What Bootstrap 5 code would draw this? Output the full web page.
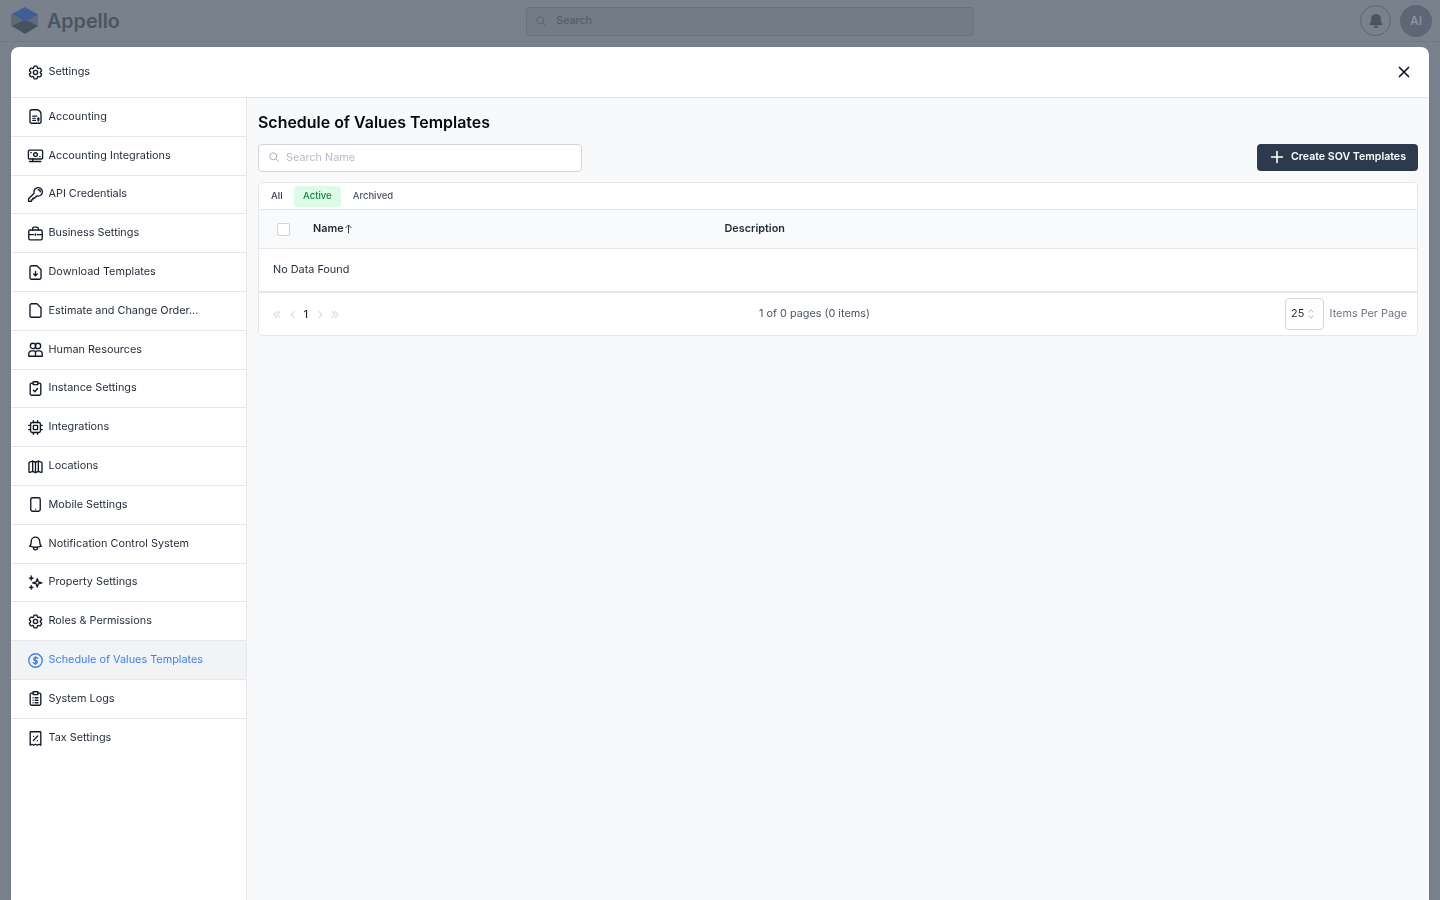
<!DOCTYPE html>
<html lang="en">
<head>
    <meta charset="UTF-8">
    <meta name="viewport" content="width=device-width, initial-scale=1.0">
    <title>Settings</title>
    <link href="https://cdn.jsdelivr.net/npm/bootstrap@5.3.0/dist/css/bootstrap.min.css" rel="stylesheet">
    <style>
        html, body { height: 100%; overflow: hidden; }
        body { background: #78818c; font-family: "Inter", "Liberation Sans", sans-serif; font-size: 10.85px; color: #111827; }
        svg { display: block; flex: none; }
        .ico { width: 17px; height: 17px; margin-top: 2px; fill: none; stroke: #111827; stroke-width: 1.9; stroke-linecap: round; stroke-linejoin: round; }

        /* dimmed app bar behind the dialog */
        .app-bar { height: 42px; padding: 0 8px 0 10px; border-bottom: 1px solid #717a85; }
        .app-logo { width: 29px; height: 29px; }
        .app-name { font-size: 19.7px; font-weight: 600; color: #4a5563; margin: 2px 0 0 8px; }
        .app-search { position: absolute; left: 526px; top: 7px; width: 448px; height: 29px; border: 1px solid #697280; border-radius: 3px; background: #737b87; color: #4f5a68; padding: 0 0 2px 8px; gap: 9px; }
        .app-search .ico { width: 12px; height: 12px; margin-top: 0; stroke: #5b6573; stroke-width: 2; }
        .bell-btn { width: 31px; height: 31px; border: 1px solid #5c6674; border-radius: 50%; color: #4a5563; }
        .bell-btn svg { width: 18px; height: 18px; fill: currentColor; }
        .avatar-btn { width: 32px; height: 32px; border-radius: 50%; background: #5d6776; color: #8a929d; font-size: 12px; font-weight: 600; margin-left: 9px; }

        /* dialog */
        .settings-dialog { position: fixed; left: 11px; top: 47px; width: 1418px; bottom: 0; background: #fff; border-radius: 8px 8px 0 0; display: flex; flex-direction: column; overflow: hidden; }
        .dialog-head { height: 51px; padding: 0 15px 2px 15.5px; border-bottom: 1px solid #e2e5ea; color: #1f2937; gap: 5px; flex: none; }
        .dialog-close { width: 20px; height: 20px; padding: 0; margin-top: 2px; background: none; border: 0; }
        .dialog-close svg { width: 16px; height: 16px; stroke: #111827; stroke-width: 1.7; stroke-linecap: round; }
        .dialog-body { flex: 1; min-height: 0; }

        .side-menu { width: 236px; flex: none; border-right: 1px solid #e5e7eb; background: #fff; }
        .side-item { height: 38.8px; display: flex; align-items: center; gap: 5px; padding: 0 15px 2px 15.5px; color: #1f2937; border-bottom: 1px solid #e5e7eb; border-radius: 0; text-decoration: none; }
        .side-item:last-child { border-bottom: 0; }
        .side-item.is-current { background: #f2f3f5; color: #3b82f6; margin-top: -1px; height: 39.8px; border-top: 1px solid #e5e7eb; }
        .side-item.is-current .ico { stroke: #3b82f6; }

        .content-pane { flex: 1; background: #f8f9fb; padding: 14px 11px 0 11px; min-width: 0; }
        .pane-title { font-size: 15.95px; font-weight: 600; color: #050810; line-height: 21px; margin: 0 0 11px; }
        .name-search { width: 324px; height: 28px; border: 1px solid #d1d5db; border-radius: 4px; background: #fff; padding: 0 0 2px 9px; gap: 6px; color: #b6bcc6; }
        .name-search .ico { width: 12px; height: 12px; margin-top: 0; stroke: #a8afba; stroke-width: 2; }
        .create-btn { height: 27px; width: 161px; background: #2d3a4d; border: 0; border-radius: 4px; color: #fff; font-size: 10.6px; font-weight: 600; padding: 0 0 2px 12px; gap: 6px; }
        .create-btn svg { width: 16px; height: 16px; stroke: currentColor; stroke-width: 1.6; stroke-linecap: round; margin-top: 1px; }

        .data-card { margin-top: 10px; background: #fff; border: 1px solid #e5e7eb; border-radius: 5px; overflow: hidden; }
        .tab-row { height: 27px; padding: 0 0 0 6px; gap: 2px; border-bottom: 1px solid #e5e7eb; }
        .tab-pill { height: 21px; padding: 0 6px; font-size: 9.5px; font-weight: 500; color: #4b5563; border-radius: 3px; display: flex; align-items: center; }
        .tab-pill.is-on { background: #dcfce7; color: #15803d; padding: 0 9.5px; margin: 0 3.5px 0 3px; }
        .tab-pill:first-child { color: #374151; }

        .data-table { margin: 0; table-layout: fixed; font-size: 10.85px; }
        .data-table th { height: 38px; background: #f9fafb; font-weight: 600; color: #1f2937; vertical-align: middle; padding: 0 0 1px; border-bottom: 1px solid #e5e7eb; }
        .data-table td { height: 44px; padding: 0 0 1px 14px; vertical-align: middle; color: #1f2937; border-bottom: 2px solid #e5e7eb; }
        .box-col { width: 54px; }
        .name-col { width: 411.5px; }
        .row-box { width: 13px; height: 13px; margin: 2px 0 0 18px; border: 1px solid #cfd3da; border-radius: 2px; background: #fff; }
        .sort-arrow { width: 9px; height: 10px; stroke: #374151; fill: none; stroke-width: 1; margin-top: 2px; }

        .pager-row { height: 42px; padding: 0 10px 0 14px; position: relative; }
        .pager-nav { gap: 7.5px; color: #d9dce1; }
        .pager-nav svg { width: 8px; height: 9px; stroke: currentColor; fill: none; stroke-width: 1.2; stroke-linecap: round; stroke-linejoin: round; margin-top: 2px; }
        .pager-nav b { font-weight: 500; color: #1f2937; margin: 0 0 0 -.5px; }
        .pager-count { position: absolute; left: 500px; top: 12px; color: #4b5563; }
        .per-page { width: 39px; height: 32px; border: 1px solid #d1d5db; border-radius: 4px; padding: 0 0 1px 5px; gap: 3px; color: #1f2937; }
        .per-page svg { width: 8px; height: 10px; stroke: #b6bcc6; fill: none; stroke-width: 1; margin-top: 1px; }
        .per-label { color: #6b7280; margin: 0 0 1px 5.5px; }
    </style>
</head>
<body>

<svg width="0" height="0" class="position-absolute">
    <defs>
        <symbol id="i-cog" viewBox="0 0 24 24"><path d="M9.594 3.94c.09-.542.56-.94 1.11-.94h2.593c.55 0 1.02.398 1.11.94l.213 1.281c.063.374.313.686.645.87.074.04.147.083.22.127.325.196.72.257 1.075.124l1.217-.456a1.125 1.125 0 0 1 1.37.49l1.296 2.247a1.125 1.125 0 0 1-.26 1.431l-1.003.827c-.293.241-.438.613-.43.992a7.723 7.723 0 0 1 0 .255c-.008.378.137.75.43.991l1.004.827c.424.35.534.955.26 1.43l-1.298 2.247a1.125 1.125 0 0 1-1.369.491l-1.217-.456c-.355-.133-.75-.072-1.076.124a6.47 6.47 0 0 1-.22.128c-.331.183-.581.495-.644.869l-.213 1.281c-.09.543-.56.94-1.11.94h-2.594c-.55 0-1.019-.398-1.11-.94l-.213-1.281c-.062-.374-.312-.686-.644-.87a6.52 6.52 0 0 1-.22-.127c-.325-.196-.72-.257-1.076-.124l-1.217.456a1.125 1.125 0 0 1-1.369-.49l-1.297-2.247a1.125 1.125 0 0 1 .26-1.431l1.004-.827c.292-.24.437-.613.43-.991a6.932 6.932 0 0 1 0-.255c.007-.38-.138-.751-.43-.992l-1.004-.827a1.125 1.125 0 0 1-.26-1.43l1.297-2.247a1.125 1.125 0 0 1 1.37-.491l1.216.456c.356.133.751.072 1.076-.124.072-.044.146-.086.22-.128.332-.183.582-.495.644-.869l.214-1.28Z"/><path d="M15 12a3 3 0 1 1-6 0 3 3 0 0 1 6 0Z"/></symbol>
        <symbol id="i-acct" viewBox="0 0 24 24"><path d="M13.500 2.500H6.500A2.200 2.200 0 0 0 4.200 4.700v14.600A2.200 2.200 0 0 0 6.500 21.500h11a2.200 2.200 0 0 0 2.300-2.200V8.500a6 6 0 0 0-6.300-6Z"/><path d="M8 11.500h6M8 14.500h4M8 17.500h4M16 13.500v5M14.800 15h2.400M14.800 17h2.400" stroke-width="1.500"/></symbol>
        <symbol id="i-monitor" viewBox="0 0 24 24"><rect x="2" y="4.500" width="20" height="12.500" rx="1.500"/><circle cx="12" cy="10.700" r="2.600"/><path d="M5.500 8h.5M18 13.500h.5M3.500 20.500h16M8 17v3.500"/></symbol>
        <symbol id="i-key" viewBox="0 0 24 24"><path d="M15.750 5.250a3 3 0 0 1 3 3m3 0a6 6 0 0 1-7.029 5.912c-.563-.097-1.159.026-1.563.43L10.500 17.250H8.250v2.250H6v2.250H2.250v-2.818c0-.597.237-1.170.659-1.591l6.499-6.499c.404-.404.527-1 .43-1.563A6 6 0 1 1 21.750 8.250Z"/></symbol>
        <symbol id="i-case" viewBox="0 0 24 24"><rect x="2.500" y="7" width="19" height="14" rx="2"/><path d="M8 7V5a2 2 0 0 1 2-2h4a2 2 0 0 1 2 2v2M2.500 13.500h7M14.500 13.500h7M12 12.500v2"/></symbol>
        <symbol id="i-down" viewBox="0 0 24 24"><path d="M14 2.500H6.500A2.200 2.200 0 0 0 4.200 4.700v14.600a2.200 2.200 0 0 0 2.300 2.200h11a2.200 2.200 0 0 0 2.300-2.200V8Z"/><path d="M12 10.500v6M9.500 14l2.500 2.500 2.500-2.500"/></symbol>
        <symbol id="i-doc" viewBox="0 0 24 24"><path d="M14 2.500H6.500A2.200 2.200 0 0 0 4.200 4.700v14.600a2.200 2.200 0 0 0 2.300 2.200h11a2.200 2.200 0 0 0 2.300-2.200V8Z"/></symbol>
        <symbol id="i-people" viewBox="0 0 24 24"><circle cx="8.500" cy="7" r="3.800"/><circle cx="15.500" cy="7" r="3.800"/><path d="M2.500 21.500v-3.500a4 4 0 0 1 4-4h3a2.500 2.500 0 0 1 2.500 2.500v5ZM12 16.500a2.500 2.500 0 0 1 2.500-2.500h3a4 4 0 0 1 4 4v3.500H12"/></symbol>
        <symbol id="i-check" viewBox="0 0 24 24"><path d="M8.500 4.500H6.500a2 2 0 0 0-2 2v13a2 2 0 0 0 2 2h11a2 2 0 0 0 2-2v-13a2 2 0 0 0-2-2h-2"/><rect x="8.500" y="2.500" width="7" height="4" rx="1"/><path d="m9 14.500 2 2 4-4.500"/></symbol>
        <symbol id="i-chip" viewBox="0 0 24 24"><rect x="5" y="5" width="14" height="14" rx="2.500"/><rect x="9" y="9" width="6" height="6" rx=".800"/><path d="M9 2.500V5M15 2.500V5M9 19v2.500M15 19v2.500M2.500 9H5M2.500 15H5M19 9h2.500M19 15h2.500"/></symbol>
        <symbol id="i-map" viewBox="0 0 24 24"><path d="M8 4.500 3.800 5.900a1.500 1.500 0 0 0-1 1.400v12a1 1 0 0 0 1.300 1L8 19l4 1.500 4-1.500 3.900 1.300a1 1 0 0 0 1.300-1v-12a1.500 1.500 0 0 0-1-1.400L16 4.500 12 6Z"/><path d="M8 4.500V19M16 4.500V19M12 6v14.500"/></symbol>
        <symbol id="i-phone" viewBox="0 0 24 24"><rect x="5.300" y="2.500" width="13.400" height="19" rx="2.500"/><path d="M12 18.500h.01"/></symbol>
        <symbol id="i-bell" viewBox="0 0 24 24"><path d="M14.857 17.082a23.848 23.848 0 0 0 5.454-1.310A8.967 8.967 0 0 1 18 9.750V9A6 6 0 0 0 6 9v.750a8.967 8.967 0 0 1-2.312 6.022c1.733.640 3.560 1.085 5.455 1.310m5.714 0a24.255 24.255 0 0 1-5.714 0m5.714 0a3 3 0 1 1-5.714 0"/></symbol>
        <symbol id="i-spark" viewBox="0 0 24 24"><path d="M14.500 6.500 16 11l5 1.500-5 1.500-1.500 4.500-1.500-4.500-5-1.500 5-1.500Z"/><path d="M6 2.500 6.900 5l2.300.9-2.300.9L6 9.300l-.9-2.500-2.300-.9 2.300-.9ZM6 16l.8 2.100 2.200.9-2.200.9L6 22l-.8-2.100-2.200-.9 2.200-.9Z" fill="#111827" stroke-width="1"/></symbol>
        <symbol id="i-dollar" viewBox="0 0 24 24"><circle cx="12" cy="12" r="9.500"/><path d="M12 6.500v11M15 9a2.500 2 0 0 0-2.500-1.300h-1.200a2.200 2.200 0 0 0 0 4.300h1.500a2.200 2.200 0 0 1 0 4.300h-1.400A2.500 2 0 0 1 9 15"/></symbol>
        <symbol id="i-logs" viewBox="0 0 24 24"><path d="M8.500 4.500H6.500a2 2 0 0 0-2 2v13a2 2 0 0 0 2 2h11a2 2 0 0 0 2-2v-13a2 2 0 0 0-2-2h-2"/><rect x="8.500" y="2.500" width="7" height="4" rx="1"/><path d="M8.500 11h.01M8.500 14.500h.01M8.500 18h.01M11.500 11h4M11.500 14.500h4M11.500 18h4"/></symbol>
        <symbol id="i-receipt" viewBox="0 0 24 24"><path d="M4.500 3.500a1 1 0 0 1 1-1h13a1 1 0 0 1 1 1v18l-2.500-1.400-2.500 1.400-2.500-1.400-2.500 1.400-2.500-1.400-2.500 1.400Z"/><path d="m9 15 6-6.500M9.300 9h.01M14.700 15h.01"/></symbol>
        <symbol id="i-search" viewBox="0 0 24 24"><circle cx="10.500" cy="10.500" r="7"/><path d="m21 21-5.500-5.500"/></symbol>
    </defs>
</svg>

<nav class="app-bar d-flex align-items-center">
    <svg class="app-logo" viewBox="0 0 29 29">
        <path d="M1 7.500 14 15v7L1 20.500Z" fill="#606b79"/>
        <path d="M28 8 15 15v7l13-1.500Z" fill="#606b79"/>
        <path d="M15 13.500 28 20 15 28 2 20Z" fill="#465160"/>
        <path d="M14.500 1 28 8.500 15 15.500 2 8Z" fill="#3f5d97"/>
    </svg>
    <span class="app-name">Appello</span>
    <div class="app-search d-flex align-items-center">
        <svg class="ico"><use href="#i-search"/></svg>
        <span>Search</span>
    </div>
    <div class="ms-auto d-flex align-items-center">
        <div class="bell-btn d-flex align-items-center justify-content-center">
            <svg viewBox="0 0 24 24"><path d="M12 2.500a6.500 6.500 0 0 0-6.500 6.500v2c0 2-.8 3.500-2.300 5 0 .8.500 1.200 1.200 1.300a50 50 0 0 0 15.200 0c.7-.1 1.200-.5 1.200-1.300-1.500-1.500-2.300-3-2.300-5V9A6.500 6.500 0 0 0 12 2.500ZM9 18.800a3 3 0 0 0 6 0 40 40 0 0 1-6 0Z"/></svg>
        </div>
        <div class="avatar-btn d-flex align-items-center justify-content-center">AI</div>
    </div>
</nav>

<div class="settings-dialog shadow-sm">
    <div class="dialog-head d-flex align-items-center">
        <svg class="ico"><use href="#i-cog"/></svg>
        <span>Settings</span>
        <button type="button" class="dialog-close ms-auto d-flex align-items-center justify-content-center" aria-label="Close">
            <svg viewBox="0 0 16 16"><path d="M3.500 3.500l9 9M12.500 3.500l-9 9"/></svg>
        </button>
    </div>
    <div class="dialog-body d-flex">
        <div class="side-menu">
            <a class="side-item" href="#"><svg class="ico"><use href="#i-acct"/></svg>Accounting</a>
            <a class="side-item" href="#"><svg class="ico"><use href="#i-monitor"/></svg>Accounting Integrations</a>
            <a class="side-item" href="#"><svg class="ico"><use href="#i-key"/></svg>API Credentials</a>
            <a class="side-item" href="#"><svg class="ico"><use href="#i-case"/></svg>Business Settings</a>
            <a class="side-item" href="#"><svg class="ico"><use href="#i-down"/></svg>Download Templates</a>
            <a class="side-item" href="#"><svg class="ico"><use href="#i-doc"/></svg>Estimate and Change Order...</a>
            <a class="side-item" href="#"><svg class="ico"><use href="#i-people"/></svg>Human Resources</a>
            <a class="side-item" href="#"><svg class="ico"><use href="#i-check"/></svg>Instance Settings</a>
            <a class="side-item" href="#"><svg class="ico"><use href="#i-chip"/></svg>Integrations</a>
            <a class="side-item" href="#"><svg class="ico"><use href="#i-map"/></svg>Locations</a>
            <a class="side-item" href="#"><svg class="ico"><use href="#i-phone"/></svg>Mobile Settings</a>
            <a class="side-item" href="#"><svg class="ico"><use href="#i-bell"/></svg>Notification Control System</a>
            <a class="side-item" href="#"><svg class="ico"><use href="#i-spark"/></svg>Property Settings</a>
            <a class="side-item" href="#"><svg class="ico"><use href="#i-cog"/></svg>Roles &amp; Permissions</a>
            <a class="side-item is-current" href="#"><svg class="ico"><use href="#i-dollar"/></svg>Schedule of Values Templates</a>
            <a class="side-item" href="#"><svg class="ico"><use href="#i-logs"/></svg>System Logs</a>
            <a class="side-item" href="#"><svg class="ico"><use href="#i-receipt"/></svg>Tax Settings</a>
        </div>

        <div class="content-pane">
            <h1 class="pane-title">Schedule of Values Templates</h1>
            <div class="d-flex justify-content-between">
                <div class="name-search d-flex align-items-center">
                    <svg class="ico"><use href="#i-search"/></svg>
                    <span>Search Name</span>
                </div>
                <button type="button" class="create-btn d-flex align-items-center">
                    <svg viewBox="0 0 16 16"><path d="M8 2.500v11M2.500 8h11"/></svg>
                    Create SOV Templates
                </button>
            </div>

            <div class="data-card">
                <div class="tab-row d-flex align-items-center">
                    <span class="tab-pill">All</span>
                    <span class="tab-pill is-on">Active</span>
                    <span class="tab-pill">Archived</span>
                </div>
                <table class="table data-table">
                    <thead>
                        <tr>
                            <th class="box-col"><div class="row-box"></div></th>
                            <th class="name-col">
                                <div class="d-flex align-items-center">Name
                                    <svg class="sort-arrow" viewBox="0 0 9 10"><path d="M4.500 9.500V1M1.500 4l3-3 3 3"/></svg>
                                </div>
                            </th>
                            <th>Description</th>
                        </tr>
                    </thead>
                    <tbody>
                        <tr><td colspan="3">No Data Found</td></tr>
                    </tbody>
                </table>
                <div class="pager-row d-flex align-items-center justify-content-between">
                    <div class="pager-nav d-flex align-items-center">
                        <svg viewBox="0 0 9 9"><path d="M4.500 1 1 4.500 4.500 8M8 1 4.500 4.500 8 8"/></svg>
                        <svg viewBox="0 0 9 9"><path d="M6 1 2.500 4.500 6 8"/></svg>
                        <b>1</b>
                        <svg viewBox="0 0 9 9"><path d="M3 1l3.500 3.500L3 8"/></svg>
                        <svg viewBox="0 0 9 9"><path d="M1 1l3.500 3.500L1 8M4.500 1 8 4.500 4.500 8"/></svg>
                    </div>
                    <span class="pager-count">1 of 0 pages (0 items)</span>
                    <div class="d-flex align-items-center">
                        <div class="per-page d-flex align-items-center">
                            25
                            <svg viewBox="0 0 8 10"><path d="M1.500 3.500 4 1l2.500 2.500M1.500 6.500 4 9l2.500-2.500"/></svg>
                        </div>
                        <span class="per-label">Items Per Page</span>
                    </div>
                </div>
            </div>
        </div>
    </div>
</div>

<script src="https://cdn.jsdelivr.net/npm/bootstrap@5.3.0/dist/js/bootstrap.bundle.min.js"></script>
</body>
</html>
